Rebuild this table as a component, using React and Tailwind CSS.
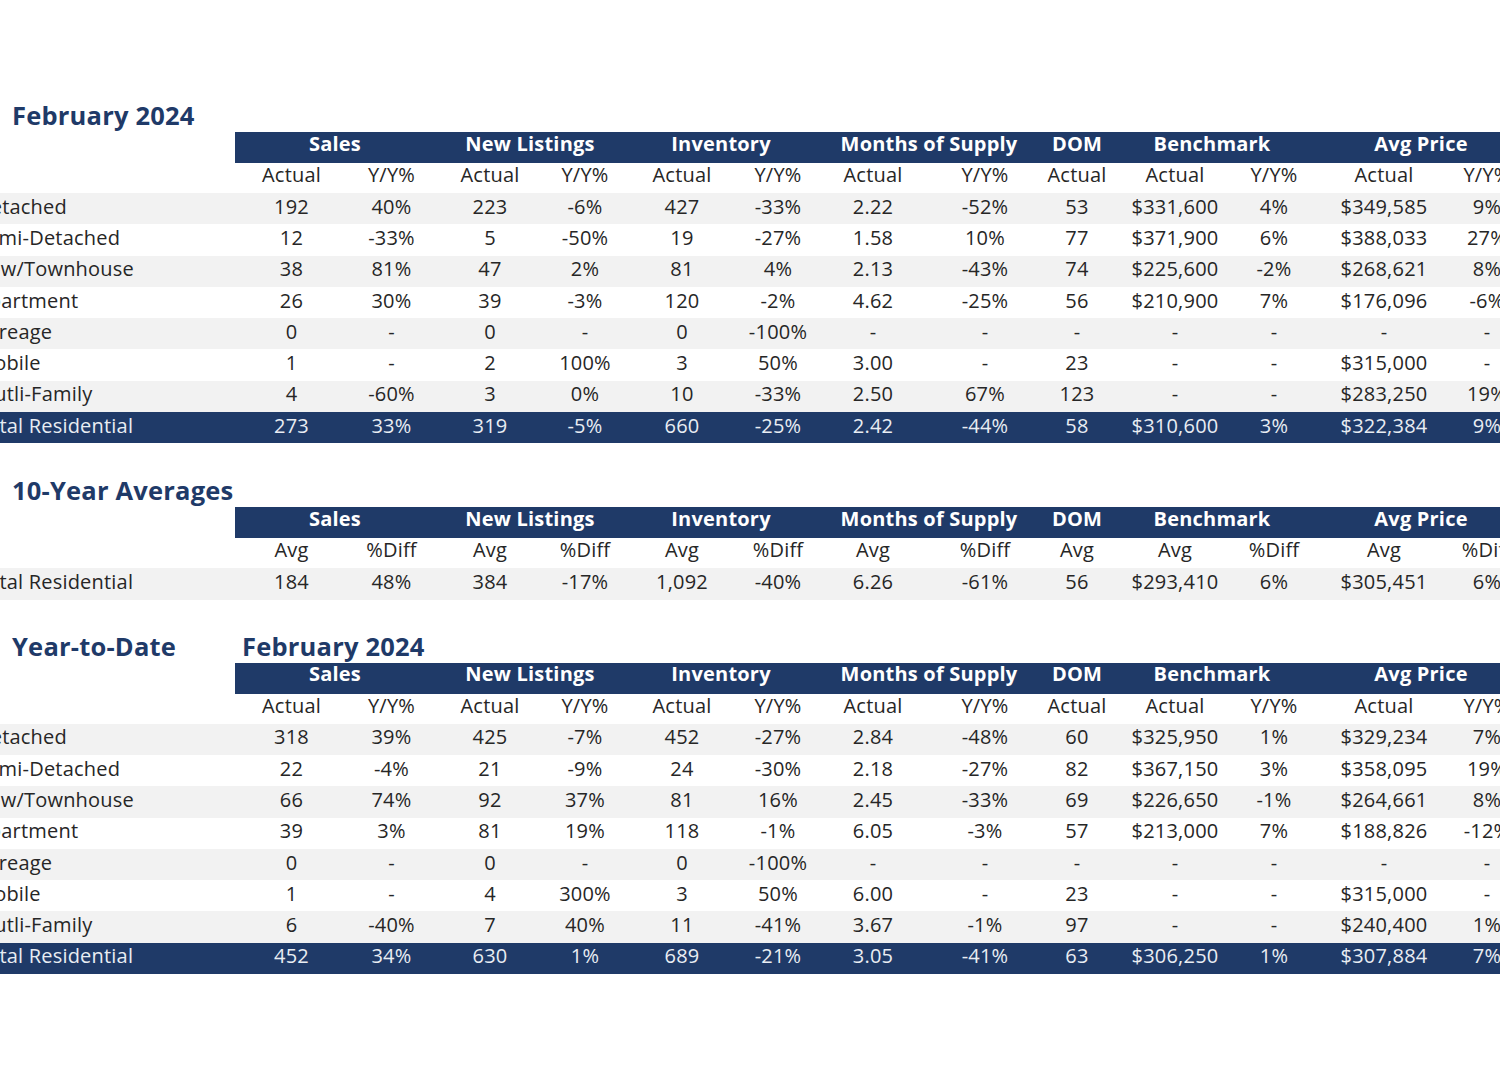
import React from "react";

const COLW = ["w-[113px]","w-[87px]","w-[110px]","w-[80px]","w-[114px]","w-[78px]","w-[112px]","w-[112px]","w-[72px]","w-[124px]","w-[74px]","w-[146px]","w-[60px]","w-[14px]"];
const GROUPS = [
  ["Sales","w-[200px]"],
  ["New Listings","w-[190px]"],
  ["Inventory","w-[192px]"],
  ["Months of Supply","w-[224px]"],
  ["DOM","w-[72px]"],
  ["Benchmark","w-[198px]"],
  ["Avg Price","w-[220px]"],
];

const SUB_ACTUAL = ["Actual","Y/Y%","Actual","Y/Y%","Actual","Y/Y%","Actual","Y/Y%","Actual","Actual","Y/Y%","Actual","Y/Y%"];
const SUB_AVG = ["Avg","%Diff","Avg","%Diff","Avg","%Diff","Avg","%Diff","Avg","Avg","%Diff","Avg","%Diff"];

const S1 = [
  ["Detached","192","40%","223","-6%","427","-33%","2.22","-52%","53","$331,600","4%","$349,585","9%"],
  ["Semi-Detached","12","-33%","5","-50%","19","-27%","1.58","10%","77","$371,900","6%","$388,033","27%"],
  ["Row/Townhouse","38","81%","47","2%","81","4%","2.13","-43%","74","$225,600","-2%","$268,621","8%"],
  ["Apartment","26","30%","39","-3%","120","-2%","4.62","-25%","56","$210,900","7%","$176,096","-6%"],
  ["Acreage","0","-","0","-","0","-100%","-","-","-","-","-","-","-"],
  ["Mobile","1","-","2","100%","3","50%","3.00","-","23","-","-","$315,000","-"],
  ["Mutli-Family","4","-60%","3","0%","10","-33%","2.50","67%","123","-","-","$283,250","19%"],
];
const T1 = ["Total Residential","273","33%","319","-5%","660","-25%","2.42","-44%","58","$310,600","3%","$322,384","9%"];

const S2 = ["Total Residential","184","48%","384","-17%","1,092","-40%","6.26","-61%","56","$293,410","6%","$305,451","6%"];

const S3 = [
  ["Detached","318","39%","425","-7%","452","-27%","2.84","-48%","60","$325,950","1%","$329,234","7%"],
  ["Semi-Detached","22","-4%","21","-9%","24","-30%","2.18","-27%","82","$367,150","3%","$358,095","19%"],
  ["Row/Townhouse","66","74%","92","37%","81","16%","2.45","-33%","69","$226,650","-1%","$264,661","8%"],
  ["Apartment","39","3%","81","19%","118","-1%","6.05","-3%","57","$213,000","7%","$188,826","-12%"],
  ["Acreage","0","-","0","-","0","-100%","-","-","-","-","-","-","-"],
  ["Mobile","1","-","4","300%","3","50%","6.00","-","23","-","-","$315,000","-"],
  ["Mutli-Family","6","-40%","7","40%","11","-41%","3.67","-1%","97","-","-","$240,400","1%"],
];
const T3 = ["Total Residential","452","34%","630","1%","689","-21%","3.05","-41%","63","$306,250","1%","$307,884","7%"];

function GroupHeader() {
  return (
    <div className="flex h-[31px]">
      <div className="w-[235px] shrink-0" />
      <div className="flex bg-[#1f3a68] shrink-0">
        {GROUPS.map(([t, w]) => (
          <div key={t} className={`${w} shrink-0 flex items-center justify-center pb-[8px] leading-none text-white font-bold text-[20px]`}>
            {t}
          </div>
        ))}
      </div>
    </div>
  );
}

function SubHeader({ labels }) {
  return (
    <div className="flex h-[30px] text-[#262626]">
      <div className="w-[235px] shrink-0" />
      {labels.map((l, i) => (
        <div key={i} className={`${COLW[i]} shrink-0 flex items-center justify-center pb-[6px] leading-none whitespace-nowrap`}>
          {l}
        </div>
      ))}
    </div>
  );
}

function Row({ cells, variant }) {
  const bg =
    variant === "total"
      ? "bg-[#1f3a68] text-[#e9edf3]"
      : variant === "gray"
      ? "bg-[#f2f2f2] text-[#262626]"
      : "bg-white text-[#262626]";
  return (
    <div className={`flex h-[31.3px] ${bg}`}>
      <div className="w-[235px] shrink-0 flex items-center pb-[4px] leading-none whitespace-nowrap">
        <span className="ml-[-24px]">{cells[0]}</span>
      </div>
      {cells.slice(1).map((c, i) => (
        <div key={i} className={`${COLW[i]} shrink-0 flex items-center justify-center pb-[4px] leading-none whitespace-nowrap`}>
          {c}
        </div>
      ))}
      <div className={`${COLW[13]} shrink-0`} />
    </div>
  );
}

function Heading({ children }) {
  return (
    <div className="h-[34px] flex items-center pl-[12px] text-[#1f3a68] font-bold text-[25.5px]">
      {children}
    </div>
  );
}

export default function App() {
  return (
    <div
      className="w-[1500px] h-[1071px] overflow-hidden bg-white pt-[98px] text-[20px] tracking-[0.2px]"
      style={{ fontFamily: '"Open Sans", "Liberation Sans", sans-serif' }}
    >
      <Heading>February 2024</Heading>
      <GroupHeader />
      <SubHeader labels={SUB_ACTUAL} />
      {S1.map((r, i) => (
        <Row key={i} cells={r} variant={i % 2 === 0 ? "gray" : "white"} />
      ))}
      <Row cells={T1} variant="total" />

      <div className="h-[30px]" />
      <Heading>10-Year Averages</Heading>
      <GroupHeader />
      <SubHeader labels={SUB_AVG} />
      <Row cells={S2} variant="gray" />

      <div className="h-[29px]" />
      <div className="h-[34px] flex items-center pl-[12px] text-[#1f3a68] font-bold text-[25.5px]">
        <span className="w-[230px] shrink-0">Year-to-Date</span>
        <span>February 2024</span>
      </div>
      <GroupHeader />
      <SubHeader labels={SUB_ACTUAL} />
      {S3.map((r, i) => (
        <Row key={i} cells={r} variant={i % 2 === 0 ? "gray" : "white"} />
      ))}
      <Row cells={T3} variant="total" />
    </div>
  );
}
